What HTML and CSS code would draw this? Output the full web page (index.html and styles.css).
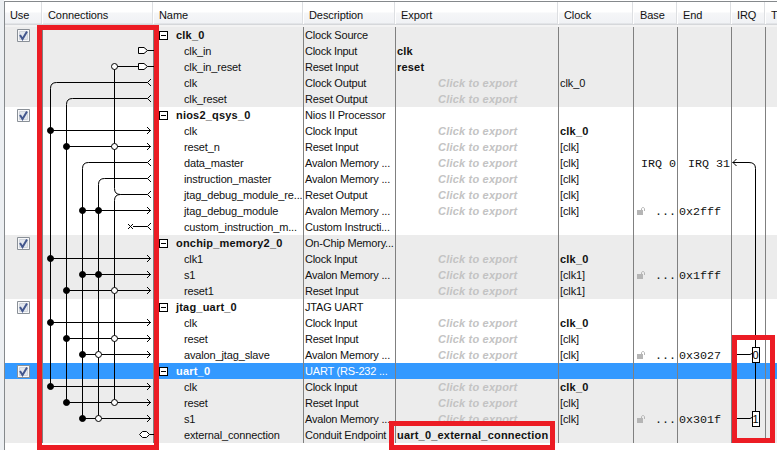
FILE: index.html
```html
<!DOCTYPE html>
<html lang="en">
<head>
<meta charset="utf-8">
<title>System Contents</title>
<link rel="stylesheet" href="styles.css">
</head>
<body>
<main class="panel">
  <div class="row header">
    <span>Use</span><span>Connections</span><span>Name</span><span>Description</span><span>Export</span><span>Clock</span><span>Base</span><span>End</span><span>IRQ</span><span>T</span>
  </div>
  <div id="rows"></div>
  <svg class="wires" id="wires" width="777" height="450" viewBox="0 0 777 450"></svg>
  <div class="mark mark-connections"></div>
  <div class="mark mark-export"></div>
  <div class="mark mark-irq"></div>
</main>
<script src="script.js"></script>
</body>
</html>
```
FILE: styles.css
```css
body {
  margin: 0;
  background: #fff;
  color: #111;
  font: 11px/16px "Liberation Sans", Arial, sans-serif;
  overflow: hidden;
}
.panel {
  position: relative;
  box-sizing: border-box;
  width: 777px;
  height: 450px;
  padding: 1px 0 0 4px;
  background: linear-gradient(90deg, #eceff2 4px, #fff 4px);
  overflow: hidden;
}
.panel::before {
  content: "";
  position: absolute;
  inset: 1px 0 0 4px;
  border: solid #85898c;
  border-width: 1px 0 0 1px;
  pointer-events: none;
  z-index: 1;
}
.row {
  display: grid;
  grid-template-columns: 37px 111px 150px 92px 163px 75px 44px 54px 34px 12px;
  height: 16px;
  padding-left: 1px;
  white-space: pre;
}
.header {
  height: 26px;
  background: linear-gradient(#fff 0, #fff 11px, #f5f6f8 12px, #f0f2f5 22px, #d5d7da 23px, #d5d7da 24px, #f3f3f3 24px);
}
.header span {
  height: 23px;
  box-sizing: border-box;
  padding: 6px 0 0 6px;
  box-shadow: inset 1px 0 #fff, -1px 0 #dddfe2;
  letter-spacing: -.08px;
}
.header span:first-child {
  padding-left: 5px;
  box-shadow: none;
}
.header span:nth-child(7) { padding-left: 7px; }
.gray { background: #ececec; }
.selected { background: #3399ff; color: #fff; }
.cell {
  box-sizing: border-box;
  border-left: 1px solid #808080;
  overflow: hidden;
  letter-spacing: -.1px;
}
.use {
  border: 0;
  padding: 2px 0 0 12px;
}
.use svg { display: block; }
.name {
  padding-left: 30px;
  letter-spacing: -.14px;
}
.name.module {
  display: flex;
  align-items: center;
  gap: 8px;
  padding-left: 5px;
}
.fold {
  box-sizing: border-box;
  width: 9px;
  height: 9px;
  border: 1px solid #000;
  background: linear-gradient(#000, #000) center / 5px 1px no-repeat #fff;
}
.desc {
  padding-left: 1px;
  letter-spacing: -.2px;
}
.desc.tight { letter-spacing: -.28px; }
.export, .clock { padding-left: 1px; }
.cell.strong {
  font-weight: bold;
  letter-spacing: .2px;
}
.cell.hint {
  padding-left: 42px;
  color: #c3c3c3;
  font-weight: bold;
  font-style: italic;
  letter-spacing: .2px;
}
.cell.mono {
  padding-top: 1px;
  font-family: "Liberation Mono", "Courier New", monospace;
  font-size: 11.67px;
  letter-spacing: 0;
}
.base {
  display: flex;
  justify-content: flex-end;
  align-items: center;
  padding-right: 1px;
}
.base svg { margin: 0 auto 0 3px; }
.end { padding-left: 1px; }
.right {
  padding-right: 1px;
  text-align: right;
}
.wires {
  position: absolute;
  inset: 0;
  z-index: 2;
  fill: none;
  stroke: #000;
  stroke-width: 1;
}
.wires .dot { fill: #000; }
.wires .ring, .wires .port { fill: #fff; }
.wires text {
  fill: #000;
  stroke: none;
  font: 11px "Liberation Sans", Arial, sans-serif;
  text-anchor: middle;
}
.mark {
  position: absolute;
  box-sizing: border-box;
  border: 5px solid #ec1c24;
  z-index: 3;
}
.mark-connections { left: 37px; top: 25px; width: 122px; height: 425px; }
.mark-export { left: 389px; top: 421px; width: 166px; height: 29px; }
.mark-irq { left: 732px; top: 335px; width: 43px; height: 108px; }
```
FILE: script.js
```js
// [name, description, export, clock, base, end]; a module row has an empty export
const HINT = "Click to export";
const MEM = "Avalon Memory ...";
const groups = [
  { gray: true, rows: [
    ["clk_0", "Clock Source"],
    ["clk_in", "Clock Input", "clk"],
    ["clk_in_reset", "Reset Input", "reset"],
    ["clk", "Clock Output", HINT, "clk_0 "],
    ["clk_reset", "Reset Output", HINT]] },
  { rows: [
    ["nios2_qsys_0", "Nios II Processor"],
    ["clk", "Clock Input", HINT, "clk_0"],
    ["reset_n", "Reset Input", HINT, "[clk]"],
    ["data_master", MEM, HINT, "[clk]", "IRQ 0", "IRQ 31"],
    ["instruction_master", MEM, HINT, "[clk]"],
    ["jtag_debug_module_re...", "Reset Output", HINT, "[clk]"],
    ["jtag_debug_module", MEM, HINT, "[clk]", "...", "0x2fff"],
    ["custom_instruction_m...", "Custom Instructi...", ""]] },
  { gray: true, rows: [
    ["onchip_memory2_0", "On-Chip Memory..."],
    ["clk1", "Clock Input", HINT, "clk_0"],
    ["s1", MEM, HINT, "[clk1]", "...", "0x1fff"],
    ["reset1", "Reset Input", HINT, "[clk1]"]] },
  { rows: [
    ["jtag_uart_0", "JTAG UART"],
    ["clk", "Clock Input", HINT, "clk_0"],
    ["reset", "Reset Input", HINT, "[clk]"],
    ["avalon_jtag_slave", MEM, HINT, "[clk]", "...", "0x3027"]] },
  { gray: true, selected: true, rows: [
    ["uart_0", "UART (RS-232 ..."],
    ["clk", "Clock Input", HINT, "clk_0"],
    ["reset", "Reset Input", HINT, "[clk]"],
    ["s1", MEM, HINT, "[clk]", "...", "0x301f"],
    ["external_connection", "Conduit Endpoint", "uart_0_external_connection"]] }
];

const check = '<svg width="13" height="13" viewBox="0 0 13 13"><path d="M.5.5h12v12H.5z" fill="#f7f8fa" stroke="#8a9097"/><path d="M2.5 2.5h8v8h-8z" fill="#e3e7ed" stroke="#d0d5dc"/><path d="M3 6l2.5 4L10 2.5" fill="none" stroke="#43578e" stroke-width="2"/></svg>';
const lock = '<svg width="9" height="9" viewBox="0 0 9 9"><path d="M0 3h6v5H0z" fill="#b5b5b5"/><path d="M4.5 3V2C4.5 0 7.5 0 7.5 2V4" fill="none" stroke="#b5b5b5"/></svg>';

const html = [];
for (const g of groups) {
  g.rows.forEach(([name, desc, exp = "", clock = "", base = "", end = ""], i) => {
    const module = i === 0;
    const tone = module && g.selected ? " selected" : g.gray ? " gray" : "";
    const expClass = exp === HINT ? "hint" : "strong";
    const tight = /Input$/.test(desc) ? " tight" : "";
    html.push(`<div class="row${tone}">
      <div class="cell use">${module ? check : ""}</div>
      <div class="cell"></div>
      <div class="cell name${module ? " module strong" : ""}">${module ? '<i class="fold"></i>' : ""}<span>${name}</span></div>
      <div class="cell desc${tight}">${desc}</div>
      <div class="cell export ${expClass}">${exp}</div>
      <div class="cell clock${clock === "clk_0" ? " strong" : ""}">${clock}</div>
      <div class="cell base mono">${base === "..." ? lock : ""}${base}</div>
      <div class="cell end mono${end.startsWith("IRQ") ? " right" : ""}">${end}</div>
      <div class="cell"></div>
      <div class="cell"></div>
    </div>`);
  });
}
document.getElementById("rows").innerHTML = html.join("");

const y = row => 34.5 + 16 * row;
const bus = [50.5, 66.5, 82.5, 98.5, 114.5];
const out = [];
const path = (d, cls = "") => out.push(`<path class="${cls}" d="${d}"/>`);
const node = (b, row, kind) => out.push(`<circle class="${kind}" cx="${bus[b]}" cy="${y(row)}" r="3"/>`);

// Outputs that turn down into a vertical bus: [bus, first row, last row]
for (const [b, from, to] of [[0, 3, 22], [1, 4, 23], [2, 8, 24], [3, 9, 24]]) {
  path(`M147.5 ${y(from)}H${bus[b] + 6}Q${bus[b]} ${y(from)} ${bus[b]} ${y(from) + 6}V${y(to)}`);
}
path(`M114.5 ${y(2)}V${y(10) - 6}Q114.5 ${y(10)} 120.5 ${y(10)}H147.5`);
path(`M120.5 ${y(10)}Q114.5 ${y(10)} 114.5 ${y(10) + 6}V${y(23)}`);
for (const r of [3, 4, 8, 9, 10, 12]) path(`M151 ${y(r) - 3.5}L147.5 ${y(r)}L151 ${y(r) + 3.5}`);

// Inputs: [row, first bus, second bus, kind of second node]
for (const [r, a, b, kind] of [[6, 0], [7, 1, 4, "ring"], [11, 2, 3, "dot"], [14, 0], [15, 2, 3, "dot"],
  [16, 1, 4, "ring"], [18, 0], [19, 1, 4, "ring"], [20, 2, 3, "ring"], [22, 0], [23, 1, 4, "ring"], [24, 2, 3, "ring"]]) {
  path(`M${bus[a]} ${y(r)}H151M147 ${y(r) - 3.5}L150.5 ${y(r)}L147 ${y(r) + 3.5}`);
  node(a, r, "dot");
  if (b) node(b, r, kind);
}

path(`M114.5 ${y(2)}H138`);
node(4, 2, "ring");
for (const r of [1, 2]) {
  path(`M138.5 ${y(r) - 3}H144L147.5 ${y(r)}L144 ${y(r) + 3}H138.5Z`, "port");
  path(`M147.5 ${y(r)}H154`);
}
path(`M133 ${y(12)}H147.5M128 ${y(12) - 2.5}l5 5m0-5l-5 5`);
path(`M139.5 ${y(25)}l3-3h4l3 3l-3 3h-4zM149.5 ${y(25)}H154`, "port");

// Interrupt line
path(`M732.5 ${y(8)}H749Q755.5 ${y(8)} 755.5 ${y(8) + 6}V411M736.5 ${y(8) - 3.5}L733 ${y(8)}L736.5 ${y(8) + 3.5}`);
[[20, "0"], [24, "1"]].forEach(([r, n]) => {
  path(`M737 ${y(r)}H750l2-1`);
  out.push(`<rect class="ring" x="752.5" y="${y(r) - 7}" width="7" height="15"/><text x="755.5" y="${y(r) + 4.5}">${n}</text>`);
});
document.getElementById("wires").innerHTML = out.join("");
```
